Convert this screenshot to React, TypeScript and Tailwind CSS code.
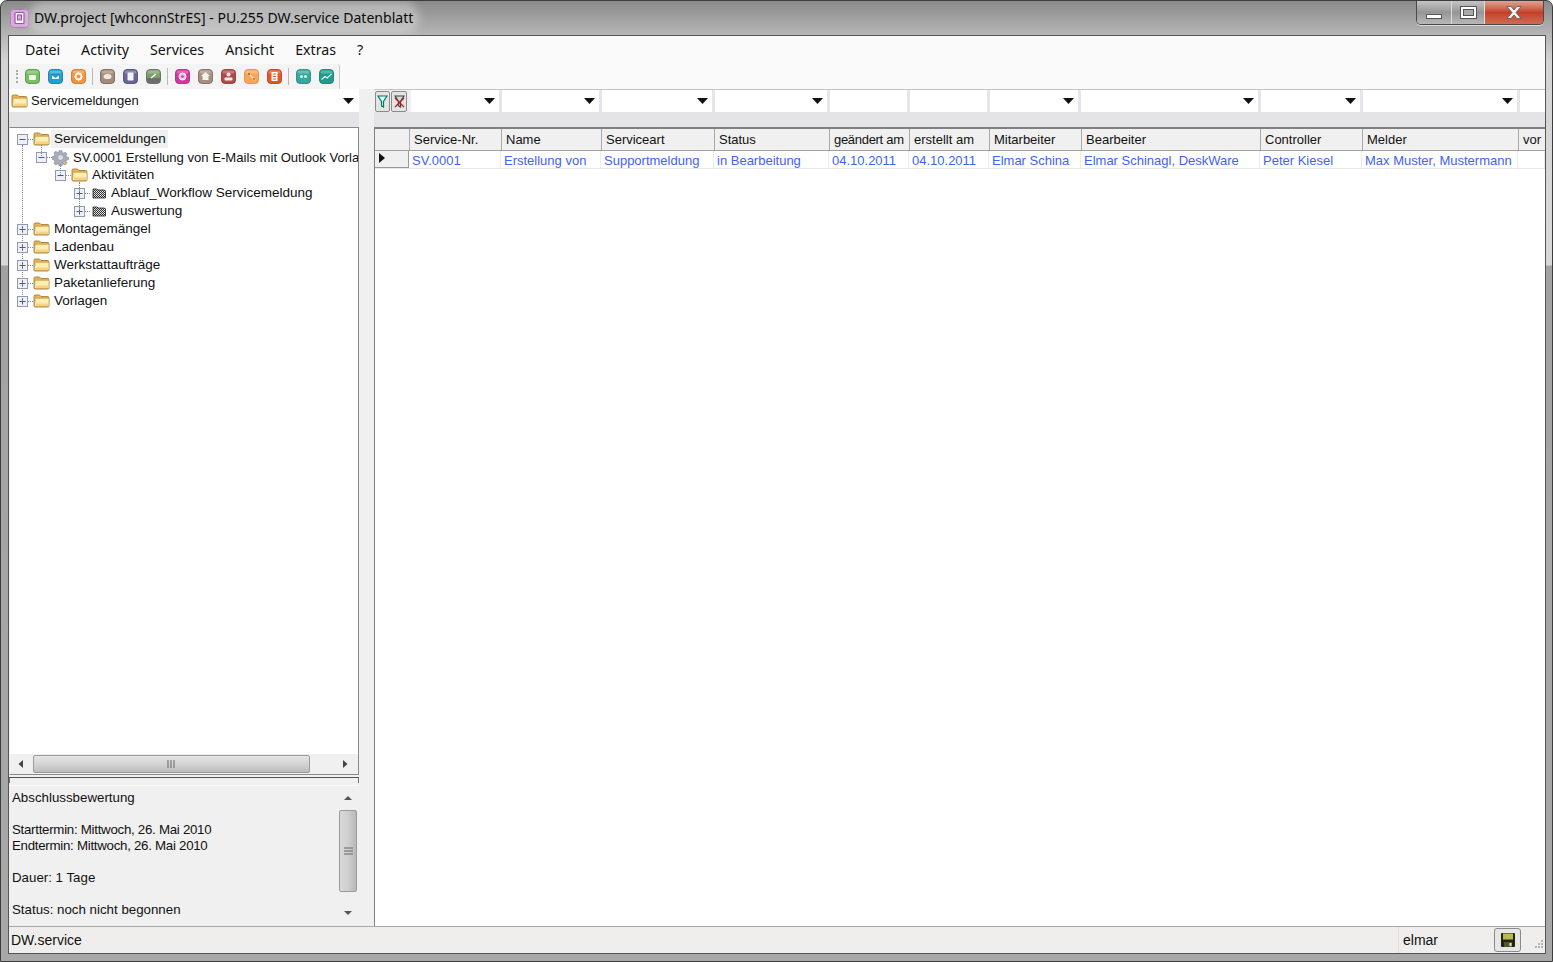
import React from "react";

const Folder = ({ dark = false }: { dark?: boolean }) =>
  dark ? (
    <svg width="14" height="12" viewBox="0 0 14 12" className="shrink-0">
      <defs>
        <pattern id="chk" width="2" height="2" patternUnits="userSpaceOnUse">
          <rect width="2" height="2" fill="#333" />
          <rect width="1" height="1" fill="#eee" />
          <rect x="1" y="1" width="1" height="1" fill="#ccc" />
        </pattern>
      </defs>
      <path d="M1 3V2h4l1 1h6.500l1 1v7H1z" fill="url(#chk)" stroke="#222" strokeWidth="0.8" />
    </svg>
  ) : (
    <svg width="17" height="14" viewBox="0 0 17 14" className="shrink-0">
      <path d="M1 3.500V2.200Q1 1 2.200 1h4.300l1.500 1.500h6.800q1 0 1 1V12q0 1-1 1H2q-1 0-1-1z" fill="#e9b54f" stroke="#a57f3a" strokeWidth="0.9" />
      <path d="M1.500 12.500 2 5q0-.8.800-.8h12.400q.8 0 .8.800v7.500z" fill="#fdeeb4" stroke="#b48c42" strokeWidth="0.6" />
      <path d="M3 9.500h12V12H3z" fill="#f8d27c" />
    </svg>
  );

const Gear = () => (
  <svg width="17" height="17" viewBox="0 0 17 17" className="shrink-0">
    <g fill="#a9acb8" stroke="#7d8090" strokeWidth="0.6">
      <path d="M7 1h3l.4 2 1.700.700 1.700-1.100 2 2-1.100 1.700.7 1.700 2 .4v2.600l-2 .4-.7 1.700 1.100 1.700-2 2-1.700-1.100-1.700.7-.4 2H7l-.4-2-1.700-.7-1.700 1.100-2-2 1.100-1.700-.7-1.700-2-.4V7.400l2-.4.700-1.700L1.200 3.600l2-2 1.700 1.100L6.600 3z" transform="translate(.8 .8) scale(.9)" />
    </g>
    <circle cx="8.500" cy="8.500" r="3" fill="#d9dbe3" stroke="#8b8e9c" strokeWidth="0.6" />
    <path d="M11 12l4 3-2 1z" fill="#e3c14b" />
  </svg>
);

const Expander = ({ open }: { open: boolean }) => (
  <svg width="11" height="11" viewBox="0 0 11 11" className="shrink-0">
    <rect x="0.500" y="0.500" width="10" height="10" fill="#eef0f5" stroke="#8f9bb0" />
    <rect x="2.500" y="5" width="6" height="1" fill="#465a7c" />
    {!open && <rect x="5" y="2.500" width="1" height="6" fill="#465a7c" />}
  </svg>
);

type Node = { label: string; level: 0 | 1 | 2 | 3; open: boolean; icon: "folder" | "gear" | "dark"; selected?: boolean; tight?: boolean };

const nodes: Node[] = [
  { label: "Servicemeldungen", level: 0, open: true, icon: "folder", selected: true },
  { label: "SV.0001 Erstellung von E-Mails mit Outlook Vorlage", level: 1, open: true, icon: "gear", tight: true },
  { label: "Aktivitäten", level: 2, open: true, icon: "folder" },
  { label: "Ablauf_Workflow Servicemeldung", level: 3, open: false, icon: "dark" },
  { label: "Auswertung", level: 3, open: false, icon: "dark" },
  { label: "Montagemängel", level: 0, open: false, icon: "folder" },
  { label: "Ladenbau", level: 0, open: false, icon: "folder" },
  { label: "Werkstattaufträge", level: 0, open: false, icon: "folder" },
  { label: "Paketanlieferung", level: 0, open: false, icon: "folder" },
  { label: "Vorlagen", level: 0, open: false, icon: "folder" },
];

const levelPad = { 0: "pl-[7px]", 1: "pl-[26px]", 2: "pl-[45px]", 3: "pl-[64px]" };

const TreeRow = ({ n }: { n: Node }) => (
  <div className={`flex h-[18px] items-center whitespace-nowrap ${levelPad[n.level]}`}>
    <Expander open={n.open} />
    <span className="h-px w-[5px] shrink-0 border-t border-dotted border-[#888]" />
    <span className="flex w-[17px] shrink-0 justify-center">
      {n.icon === "folder" ? <Folder /> : n.icon === "gear" ? <Gear /> : <Folder dark />}
    </span>
    <span className={`ml-[1px] flex h-[18px] items-center pl-[3px] pr-[2px] pt-[1px] text-[#111] ${n.tight ? "text-[13.100px]" : "text-[13.500px]"} ${n.selected ? "bg-[#f0f0f0]" : ""}`}>
      {n.label}
    </span>
  </div>
);

const Tool = ({ c, d, children }: { c: string; d: string; children: React.ReactNode }) => (
  <svg width="15" height="15" viewBox="0 0 15 15" className="shrink-0">
    <rect x="0.500" y="0.500" width="14" height="14" rx="3.500" fill={c} stroke={d} strokeWidth="0.8" />
    <rect x="1.500" y="1.500" width="12" height="3" rx="1.500" fill="#fff" opacity="0.25" />
    {children}
  </svg>
);

const Sep = () => <span className="ml-[6px] mr-[7px] h-[17px] w-px shrink-0 bg-[#b9b9b9]" />;

const Caret = () => (
  <svg width="11" height="6" viewBox="0 0 11 6" className="shrink-0">
    <path d="M0 0h11L5.500 6z" fill="#111" />
  </svg>
);

const Combo = ({ cut = false }: { cut?: boolean }) => (
  <div className="flex h-[22px] items-center justify-end bg-white pr-[4px]">{!cut && <Caret />}</div>
);

const cols = "grid-cols-[34px_92px_100px_113px_115px_80px_80px_92px_179px_102px_156px_minmax(0,1fr)]";

const headers = ["", "Service-Nr.", "Name", "Serviceart", "Status", "geändert am", "erstellt am", "Mitarbeiter", "Bearbeiter", "Controller", "Melder", "vor"];
const cells = ["SV.0001", "Erstellung von", "Supportmeldung", "in Bearbeitung", "04.10.2011", "04.10.2011", "Elmar Schina", "Elmar Schinagl, DeskWare", "Peter Kiesel", "Max Muster, Mustermann", ""];

const filters: { kind: "combo" | "input" }[] = [
  { kind: "combo" }, { kind: "combo" }, { kind: "combo" }, { kind: "combo" }, { kind: "input" }, { kind: "input" },
  { kind: "combo" }, { kind: "combo" }, { kind: "combo" }, { kind: "combo" }, { kind: "input" },
];

const filterCols = "grid-cols-[88px_97px_110px_112px_77px_77px_88px_177px_99px_154px_minmax(0,1fr)]";

export default function App() {
  return (
    <div className="relative flex h-[962px] w-[1553px] flex-col overflow-hidden rounded-t-[7px] border border-[#3c3c3c] bg-[linear-gradient(to_bottom,#8a8a8a_0px,#b6b6b6_34px,#d4d4d4_60px,#d8d8d8_264px,#a2a2a2_265px,#a8a8a8_100%)] font-['Liberation_Sans',sans-serif] text-[14px] text-[#111]">
      {/* title bar */}
      <div className="flex h-[34px] shrink-0 items-start justify-between pl-[9px]">
        <div className="flex items-center pt-[7px]">
          <svg width="19" height="19" viewBox="0 0 19 19" className="shrink-0">
            <rect x="0.500" y="0.500" width="18" height="18" rx="3" fill="#d9a8dc" stroke="#a885b0" />
            <rect x="5" y="3.500" width="9" height="11" rx="1" fill="#fff" stroke="#a04ea8" strokeWidth="1.200" />
            <rect x="7.500" y="6" width="4" height="5" fill="#d9a8dc" stroke="#a04ea8" />
          </svg>
          <span className="ml-[5px] whitespace-nowrap rounded-[10px] bg-[#d8d8d8]/50 font-['Noto_Sans',sans-serif] text-[14.050px] leading-[20px] text-[#0a0a0a] shadow-[0_0_10px_6px_rgba(225,225,225,0.5)]">
            DW.project [whconnStrES] - PU.255 DW.service Datenblatt
          </span>
        </div>
        <div className="mr-[8px] flex h-[24px] overflow-hidden rounded-b-[5px] border border-t-0 border-[#4a4a4a] shadow-[0_1px_0_rgba(255,255,255,0.6)]">
          <div className="flex w-[35px] items-end justify-center border-r border-[#dcdcdc] bg-gradient-to-b from-[#c4c4c4] via-[#969696] to-[#b8b8b8] pb-[5px]">
            <span className="h-[5px] w-[16px] border border-[#555] bg-white" />
          </div>
          <div className="flex w-[33px] items-center justify-center border-r border-[#dcdcdc] bg-gradient-to-b from-[#c4c4c4] via-[#969696] to-[#b8b8b8]">
            <span className="flex h-[13px] w-[17px] items-center justify-center border border-[#555] bg-white">
              <span className="h-[7px] w-[11px] border border-[#555] bg-[#a9a9a9]" />
            </span>
          </div>
          <div className="flex w-[58px] items-center justify-center bg-gradient-to-b from-[#e0a294] via-[#c5402a] to-[#d06a52]">
            <svg width="18" height="15" viewBox="0 0 18 15">
              <path d="M2 1.500h4l3 3.500 3-3.500h4L11 7.500l5 6h-4l-3-3.500-3 3.500H2l5-6z" fill="#f4f4f4" stroke="#555" strokeWidth="0.8" />
            </svg>
          </div>
        </div>
      </div>

      {/* client */}
      <div className="mb-[7px] ml-[7px] mr-[6px] flex min-h-0 flex-1 flex-col border border-[#555] bg-[#f0f0f0]">
        <div className="flex h-[28px] shrink-0 items-center gap-[21px] bg-[#fafafa] pl-[16px] font-['Noto_Sans',sans-serif] text-[14.200px] text-[#111]">
          <span>Datei</span>
          <span>Activity</span>
          <span>Services</span>
          <span>Ansicht</span>
          <span>Extras</span>
          <span>?</span>
        </div>
        <div className="flex h-[25px] shrink-0 bg-[#fafafa]">
          <div className="flex w-[331px] items-center rounded-tr-[3px] border-r border-[#c8c8c8] bg-[#f4f4f4] pl-[7px]">
            <span className="h-[13px] w-[2px] shrink-0 border-l-2 border-dotted border-[#aaa]" />
            <div className="ml-[7px] flex items-center gap-[8px]">
              <Tool c="#74c063" d="#4b8a45"><rect x="4" y="6" width="7" height="5" rx="1" fill="#eef7e8" /></Tool>
              <Tool c="#1ca3d6" d="#136f96"><path d="M3.500 5.500h8v5h-8zM3.500 5.500l4 3 4-3" fill="#eaf7fd" stroke="#1580ab" strokeWidth="0.7" /></Tool>
              <Tool c="#f6923c" d="#d0701f"><circle cx="7.500" cy="7.500" r="3" fill="none" stroke="#fff" strokeWidth="1.800" /><path d="M7.500 2.800v2M7.500 10v2M2.800 7.500h2M10 7.500h2" stroke="#fff" /></Tool>
            </div>
            <Sep />
            <div className="flex items-center gap-[8px]">
              <Tool c="#a38d7a" d="#6f5d4e"><ellipse cx="7.500" cy="7.500" rx="4" ry="2.600" fill="#efe9e1" /></Tool>
              <Tool c="#676699" d="#47466f"><rect x="4.500" y="3.500" width="6" height="8" rx="1" fill="#f4f4fb" /></Tool>
              <Tool c="#7b9e69" d="#55624c"><rect x="1" y="9" width="13" height="5" fill="#6d6d6d" /><path d="M5 9l5-4" stroke="#fff" strokeWidth="1.500" /></Tool>
            </div>
            <Sep />
            <div className="flex items-center gap-[8px]">
              <Tool c="#d6369f" d="#a32277"><circle cx="7.500" cy="7.500" r="3.500" fill="#f3c5e4" stroke="#fff" /><circle cx="7.500" cy="7.500" r="1.300" fill="#d6369f" /></Tool>
              <Tool c="#a49080" d="#75665a"><path d="M7.500 3 12 7H10.500v4h-6V7H3z" fill="#f6f1ea" /></Tool>
              <Tool c="#b34a4a" d="#843232"><circle cx="7.500" cy="5.500" r="2" fill="#fbeeee" /><rect x="3.500" y="8.500" width="8" height="3" rx="1" fill="#fbeeee" /></Tool>
              <Tool c="#f6a659" d="#e08a3a"><path d="M4 4l7 7" stroke="#fff3e2" strokeWidth="1.300" /><circle cx="5" cy="5" r="1.200" fill="#c96c24" /><circle cx="10" cy="10" r="1" fill="#c96c24" /></Tool>
              <Tool c="#e4562a" d="#b23a16"><rect x="4.500" y="3" width="6" height="9" fill="#fff" /><path d="M6 5h3M6 7.500h3M6 10h3" stroke="#e4562a" /></Tool>
            </div>
            <Sep />
            <div className="flex items-center gap-[8px]">
              <Tool c="#35a99c" d="#1f7f74"><circle cx="5.500" cy="7.500" r="1.500" fill="#d9f4f0" /><circle cx="9.500" cy="7.500" r="1.500" fill="#d9f4f0" /></Tool>
              <Tool c="#1d9e8b" d="#137466"><path d="M2.500 10.500 6 7.500l2 1.500 4.500-4" fill="none" stroke="#eafaf7" strokeWidth="1.200" /></Tool>
            </div>
          </div>
        </div>

        <div className="flex min-h-0 flex-1">
          {/* left column */}
          <div className="flex w-[350px] shrink-0 flex-col">
            <div className="flex h-[23px] shrink-0 items-center bg-white pl-[2px] pr-[5px]">
              <Folder />
              <span className="ml-[3px] flex-1 text-[13px]">Servicemeldungen</span>
              <Caret />
            </div>
            <div className="h-[15px] shrink-0 bg-[#e4e4e6]" />
            <div className="flex h-[648px] shrink-0 flex-col border border-[#8a8a8a] border-l-[#f0f0f0] bg-white">
              <div className="relative min-h-0 flex-1 overflow-hidden pt-[2px]">
                <span className="absolute left-[12px] top-[17px] h-[156px] border-l border-dotted border-[#888]" />
                <span className="absolute left-[31px] top-[17px] h-[11px] border-l border-dotted border-[#888]" />
                <span className="absolute left-[50px] top-[36px] h-[11px] border-l border-dotted border-[#888]" />
                <span className="absolute left-[69px] top-[54px] h-[30px] border-l border-dotted border-[#888]" />
                {nodes.map((n) => (
                  <TreeRow key={n.label} n={n} />
                ))}
              </div>
              <div className="flex h-[20px] shrink-0 items-center bg-[#f0f0f0]">
                <svg width="23" height="20" viewBox="0 0 23 20" className="shrink-0">
                  <path d="M13 6v8L8.500 10z" fill="#444" />
                </svg>
                <div className="flex h-[18px] w-[277px] items-center justify-center rounded-[2px] border border-[#9a9a9a] bg-gradient-to-b from-[#e6e6e6] via-[#d4d4d4] to-[#bdbdbd]">
                  <svg width="9" height="8" viewBox="0 0 9 8"><path d="M1 0v8M4 0v8M7 0v8" stroke="#666" strokeWidth="1" /></svg>
                </div>
                <svg width="48" height="20" viewBox="0 0 48 20" className="shrink-0">
                  <path d="M33 6v8l4.500-4z" fill="#444" />
                </svg>
              </div>
            </div>
            <div className="mt-[2px] h-[6px] shrink-0 border border-b-0 border-[#777] border-t-[#555] bg-[#f0f0f0]" />
            <div className="mt-[2px] flex min-h-0 flex-1 border-t border-[#fafafa]">
              <div className="flex-1 pl-[3px] text-[13.300px] leading-[16px] text-[#111]">
                <p className="pt-[4px]">Abschlussbewertung</p>
                <p className="mt-[16px] tracking-[-0.28px]">Starttermin: Mittwoch, 26. Mai 2010</p>
                <p className="tracking-[-0.28px]">Endtermin: Mittwoch, 26. Mai 2010</p>
                <p className="mt-[16px]">Dauer: 1 Tage</p>
                <p className="mt-[16px]">Status: noch nicht begonnen</p>
              </div>
              <div className="mr-[2px] flex w-[18px] shrink-0 flex-col items-center">
                <svg width="18" height="24" viewBox="0 0 18 24" className="shrink-0"><path d="M5 14h8l-4-4z" fill="#555" /></svg>
                <div className="flex h-[82px] w-[18px] shrink-0 items-center justify-center rounded-[2px] border border-[#9a9a9a] bg-gradient-to-r from-[#d8d8d8] via-[#cfcfcf] to-[#b8b8b8]">
                  <svg width="9" height="9" viewBox="0 0 9 9"><path d="M0 1h9M0 4h9M0 7h9" stroke="#666" /></svg>
                </div>
                <svg width="18" height="24" viewBox="0 0 18 24" className="mt-[10px] shrink-0"><path d="M5 9h8l-4 4z" fill="#555" /></svg>
              </div>
            </div>
          </div>

          <div className="w-[15px] shrink-0" />

          {/* right column */}
          <div className="flex min-w-0 flex-1 flex-col">
            <div className="flex h-[23px] shrink-0 border-t border-[#c4c4c4] bg-[#e4e6ea]">
              <div className="flex w-[37px] shrink-0 items-center gap-[1px] bg-[#f0f0f0] pl-px">
                <FilterBtn />
                <FilterBtn off />
              </div>
              <div className={`grid min-w-0 flex-1 gap-x-[3px] ${filterCols}`}>
                {filters.map((f, i) => (
                  <Combo key={i} cut={f.kind === "input"} />
                ))}
              </div>
            </div>
            <div className="h-[15px] shrink-0 bg-[#e4e4e6]" />
            <div className="flex min-h-0 flex-1 flex-col border-l border-t-2 border-[#808080] bg-white">
              <div className={`grid h-[22px] shrink-0 border-b border-[#a0a0a0] bg-[#f0f0f0] ${cols}`}>
                {headers.map((h, i) => (
                  <div key={i} className={`flex items-center whitespace-nowrap pl-[4px] text-[13px] ${i > 0 ? "border-l border-[#aaa]" : ""} ${i === 5 ? "tracking-[-0.3px]" : ""}`}>
                    {h}
                  </div>
                ))}
              </div>
              <div className={`grid h-[18px] shrink-0 border-b border-[#e8e8e8] ${cols}`}>
                <div className="flex items-center border-b border-r border-[#999] bg-[#f0f0f0] pb-[2px] pl-[4px]">
                  <svg width="6" height="10" viewBox="0 0 6 10"><path d="M0 0v10l6-5z" fill="#111" /></svg>
                </div>
                {cells.map((c, i) => (
                  <div key={i} className="flex items-center overflow-hidden whitespace-nowrap border-r border-[#ececec] pl-[3px] pt-[2px] text-[13px] text-[#3f63f2]">
                    {c}
                  </div>
                ))}
              </div>
            </div>
          </div>
        </div>

        {/* status bar */}
        <div className="flex h-[27px] shrink-0 items-center border-t border-[#a8a8a8] bg-[#f0eeec]">
          <span className="flex-1 pl-[2px] text-[14px]">DW.service</span>
          <div className="flex h-full w-[147px] items-center border-l border-[#dcdcdc] pl-[4px]">
            <span className="w-[91px] text-[14px]">elmar</span>
            <div className="flex h-[24px] w-[27px] items-center justify-center rounded-[3px] border border-[#8a8a8a] bg-[#e6e6e6]">
              <svg width="16" height="16" viewBox="0 0 16 16">
                <rect x="1" y="1" width="14" height="14" rx="1" fill="#23230f" />
                <rect x="3" y="1.500" width="10" height="6" fill="#b9b94c" />
                <rect x="4" y="10" width="8" height="5" fill="#55552b" />
                <rect x="9.500" y="11" width="2" height="3" fill="#e6e6e6" />
              </svg>
            </div>
            <svg width="12" height="12" viewBox="0 0 12 12" className="ml-[11px] mt-[10px] shrink-0">
              <g fill="#b4b4b4">
                <rect x="9" y="1" width="2" height="2" /><rect x="6" y="4" width="2" height="2" /><rect x="9" y="4" width="2" height="2" />
                <rect x="3" y="7" width="2" height="2" /><rect x="6" y="7" width="2" height="2" /><rect x="9" y="7" width="2" height="2" />
              </g>
            </svg>
          </div>
        </div>
      </div>
    </div>
  );
}

function FilterBtn({ off = false }: { off?: boolean }) {
  return (
    <div className={`flex h-[21px] items-center justify-center rounded-[2px] border border-[#8a8a8a] bg-[#e4e4e4] ${off ? "w-[16px]" : "w-[15px]"}`}>
      <svg width="11" height="13" viewBox="0 0 11 13">
        <path d="M1 1h9L6.500 6.500V12L4.500 11V6.500z" fill={off ? "#cdd" : "#dff"} stroke={off ? "#444" : "#075"} strokeWidth="1.200" />
        {off && <path d="M1 3l9 9M10 3l-9 9" stroke="#b02020" strokeWidth="1.300" />}
      </svg>
    </div>
  );
}
